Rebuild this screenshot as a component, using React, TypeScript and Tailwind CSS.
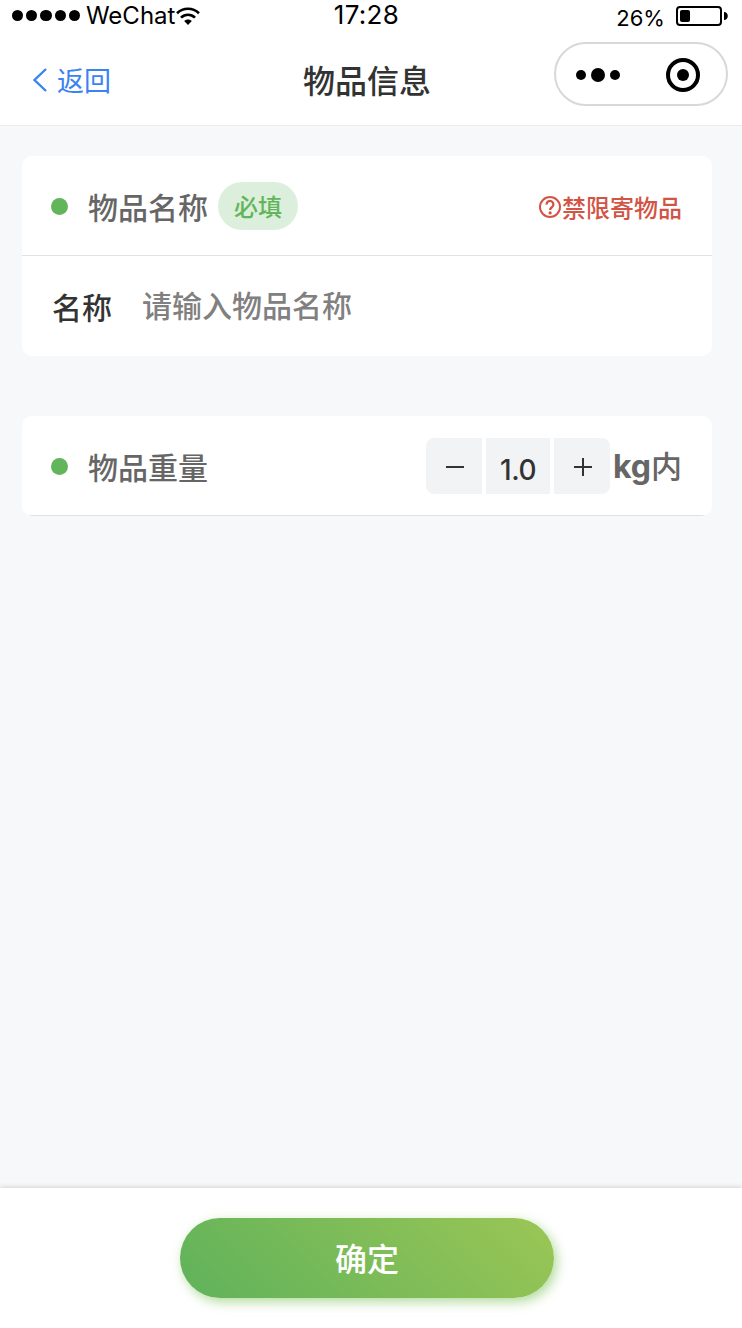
import { useState } from 'react'
import type { ReactNode } from 'react'

function StatusBar() {
	return (
		<div className="flex h-8 items-start justify-between text-black">
			<div className="flex w-[240px] items-start pl-3">
				<div className="flex gap-[3px] pt-[10px]">
					{[0, 1, 2, 3, 4].map((dot) => (
						<span key={dot} className="h-[11px] w-[11.2px] rounded-full bg-black" />
					))}
				</div>
				<span className="ml-[6px] text-[24px] leading-8">WeChat</span>
				<svg className="mt-[7px] ml-px h-[19px] w-6" viewBox="0 0 24 19" fill="none" stroke="currentColor">
					<path d="M1 6.2C7.2.2 16.8.2 23 6.2" strokeWidth="2.6" />
					<path d="M5 10.6c4-3.9 10-3.9 14 0" strokeWidth="2.6" />
					<path d="M8.2 14c2.200-2 5.400-2 7.600 0L12 18z" fill="currentColor" stroke="none" />
				</svg>
			</div>
			<span className="mr-[9px] text-[26px] leading-[30px] tracking-[0.3px]">17:28</span>
			<div className="flex w-[240px] justify-end pr-[13px]">
				<span className="text-[22px] leading-9">26%</span>
				<svg className="mt-[6px] ml-[11px] h-5 w-[53px]" viewBox="0 0 53 20" fill="none">
					<rect x="1" y="1" width="44" height="18" rx="3" stroke="black" strokeWidth="2" />
					<rect x="4" y="4" width="10" height="12" rx="2" fill="black" />
					<path d="M48 6c5 0 5 8 0 8z" fill="black" />
				</svg>
			</div>
		</div>
	)
}

function Capsule() {
	return (
		<div className="flex h-16 w-[174px] items-center justify-between rounded-full border-2 border-[#d8d8d8] bg-white pt-0.5 pr-[26px] pl-5">
			<div className="flex items-center gap-[5px]">
				<span className="size-[10px] rounded-full bg-black" />
				<span className="size-[14px] rounded-full bg-black" />
				<span className="size-[10px] rounded-full bg-black" />
			</div>
			<div className="flex size-[34px] items-center justify-center rounded-full border-4 border-black">
				<span className="size-3 rounded-full bg-black" />
			</div>
		</div>
	)
}

function NavBar() {
	return (
		<div className="flex h-[94px] items-start justify-between border-b border-[#e9ebee] pr-3.5 pl-8">
			<button className="flex h-24 w-[148px] items-center text-[27px] font-normal whitespace-nowrap text-[#3b83f2]">
				<svg className="mr-[9px] h-6 w-4" viewBox="0 0 16 24" fill="none" stroke="currentColor" strokeWidth="2.4">
					<path d="M14 1 2.500 12 14 23" />
				</svg>
				<span className="pt-1">返回</span>
			</button>
			<h1 className="flex h-24 items-center pt-1 text-[32px] font-medium text-[#333]">物品信息</h1>
			<div className="pt-[10px]">
				<Capsule />
			</div>
		</div>
	)
}

function CardHeader({ title, children }: { title: string; children?: ReactNode }) {
	return (
		<div className="flex h-[100px] items-center border-b border-[#e2e2e2] pr-[30px] pl-[29px]">
			<span className="mt-0.5 mr-5 size-[17px] rounded-full bg-[#62b55b]" />
			<h2 className="pt-[5px] text-[30px] font-medium text-[#666]">{title}</h2>
			{children}
		</div>
	)
}

export default function App() {
	const [weight, setWeight] = useState(1)

	return (
		<div className="flex h-[1328px] w-[742px] flex-col overflow-hidden bg-[#f7f8fa] font-[Inter,'Noto_Sans_CJK_SC',sans-serif]">
			<header className="bg-white">
				<StatusBar />
				<NavBar />
			</header>

			<main className="flex flex-1 flex-col gap-[60px] pt-[30px] pr-[30px] pl-[22px]">
				<section className="h-[200px] overflow-hidden rounded-[10px] bg-white">
					<CardHeader title="物品名称">
						<span className="ml-[10px] flex h-12 w-20 items-center justify-center rounded-full bg-[#dcefdd] pt-[5px] text-[24px] font-medium text-[#62b55b]">
							必填
						</span>
						<a className="ml-auto flex items-center text-[24px] font-medium text-[#d25445]">
							<svg className="mt-[3px] size-6" viewBox="0 0 24 24" fill="none" stroke="currentColor" strokeWidth="2">
								<circle cx="12" cy="12" r="10" />
								<path d="M8.600 9.600a3.400 3.400 0 1 1 5.400 2.500c-1.200.9-1.900 1.300-1.900 3" strokeWidth="2.300" />
								<circle cx="12.100" cy="17.900" r="1.600" fill="currentColor" stroke="none" />
							</svg>
							<span className="pt-[6px]">禁限寄物品</span>
						</a>
					</CardHeader>
					<label className="flex h-[100px] items-center pt-1 pl-[30px] text-[30px] font-medium text-[#333]">
						名称
						<input
							className="mb-[3px] ml-[30px] w-[500px] outline-none placeholder:text-[#808080]"
							placeholder="请输入物品名称"
						/>
					</label>
				</section>

				<section className="h-[100px] overflow-hidden rounded-[10px] bg-white">
					<CardHeader title="物品重量">
						<div className="ml-auto flex h-14 gap-1 overflow-hidden rounded-lg text-[#333]">
							<button
								className="flex w-14 items-center justify-center bg-[#f2f3f5]"
								onClick={() => setWeight(Math.max(1, weight - 1))}
							>
								<svg className="mt-0.5 ml-0.5 size-[18px]" viewBox="0 0 18 18" stroke="currentColor" strokeWidth="2">
									<path d="M0 9h18" />
								</svg>
							</button>
							<span className="flex w-16 items-center justify-center bg-[#f2f3f5] pt-2 text-[28px] font-medium tracking-[-0.5px]">
								{weight.toFixed(1)}
							</span>
							<button
								className="flex w-14 items-center justify-center bg-[#f2f3f5]"
								onClick={() => setWeight(weight + 1)}
							>
								<svg className="mt-0.5 ml-0.5 size-[18px]" viewBox="0 0 18 18" stroke="currentColor" strokeWidth="2">
									<path d="M0 9h18M9 0v18" />
								</svg>
							</button>
						</div>
						<span className="ml-px flex w-[71px] items-baseline justify-end pt-[3px] text-[32px] font-bold text-[#666]">
							kg<span className="text-[31px] font-medium">内</span>
						</span>
					</CardHeader>
				</section>
			</main>

			<footer className="flex h-[140px] justify-center bg-white pt-[30px] pr-2 shadow-[0_0_6px_rgba(0,0,0,0.2)]">
				<button className="h-20 w-[374px] rounded-full bg-[linear-gradient(45deg,#5fb25b,#9bc655)] pt-1 text-[32px] font-medium text-white shadow-[3px_4px_12px_rgba(125,195,90,0.6)]">
					确定
				</button>
			</footer>
		</div>
	)
}
